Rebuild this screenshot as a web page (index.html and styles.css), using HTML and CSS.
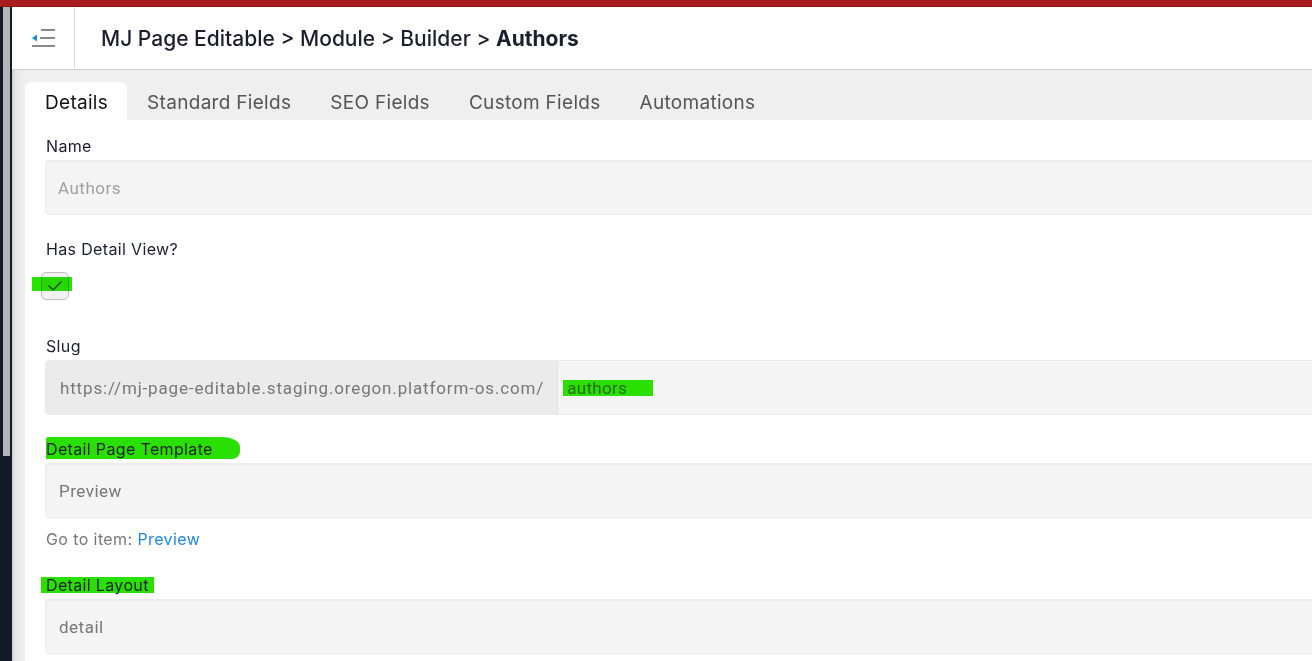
FILE: index.html
```html
<!DOCTYPE html>
<html lang="en">
<head>
<meta charset="utf-8">
<title>Authors</title>
<link rel="stylesheet" href="styles.css">
</head>
<body>
<div class="topbar"></div>
<div class="frame">
  <aside class="rail"><div class="thumb"></div></aside>
  <main class="main">
    <header class="header">
      <div class="menu-cell">
        <svg width="24" height="20" viewBox="0 0 24 20" aria-hidden="true">
          <rect x="9" y="1" width="14" height="2" fill="#8a8a8a"/>
          <rect x="8" y="9" width="15" height="2" fill="#8a8a8a"/>
          <rect x="0" y="17" width="23" height="2" fill="#8a8a8a"/>
          <path d="M0 10 L5 6.5 L5 13.5 Z" fill="#1e88e5"/>
        </svg>
      </div>
      <h1 class="crumbs">MJ Page Editable &gt; Module &gt; Builder &gt; <b>Authors</b></h1>
    </header>
    <nav class="tabs">
      <span class="tab active">Details</span>
      <span class="tab">Standard Fields</span>
      <span class="tab">SEO Fields</span>
      <span class="tab">Custom Fields</span>
      <span class="tab">Automations</span>
    </nav>
    <section class="panel">
      <div class="field">
        <label class="label">Name</label>
        <div class="input muted">Authors</div>
      </div>
      <div class="field">
        <label class="label">Has Detail View?</label>
        <div class="check-wrap">
          <span class="mark mark-check"></span>
          <span class="checkbox">
            <svg width="16" height="12" viewBox="0 0 16 12" aria-hidden="true"><path d="M1.5 5.5 L6 10 L14.5 1.5" fill="none" stroke="#444" stroke-width="1.2"/></svg>
          </span>
        </div>
      </div>
      <div class="field slug-field">
        <label class="label">Slug</label>
        <div class="group">
          <span class="prefix">https://mj-page-editable.staging.oregon.platform-os.com/</span>
          <span class="group-input"><span class="hl">authors</span></span>
        </div>
      </div>
      <div class="field tpl-field">
        <label class="label"><span class="stroke">Detail Page Template</span></label>
        <div class="input">Preview</div>
        <p class="goto">Go to item: <a href="#">Preview</a></p>
      </div>
      <div class="field layout-field">
        <label class="label"><span class="box">Detail Layout</span></label>
        <div class="input">detail</div>
      </div>
    </section>
  </main>
</div>
</body>
</html>
```
FILE: styles.css
```css
* { box-sizing: border-box; }
html, body { margin: 0; height: 100%; overflow: hidden; }
body {
  font-family: Inter, "Noto Sans", sans-serif;
  color: #1a1f2e;
  background: #fff;
}
.topbar {
  height: 7px;
  background: #a81c20;
  border-bottom: 1px solid #8f1518;
}
.frame {
  display: flex;
  height: calc(100% - 7px);
}
.rail {
  width: 12px;
  flex: none;
  background: #111a2b;
  padding: 0 2px 0 3px;
}
.thumb {
  width: 7px;
  height: 449px;
  background: #b4b4b4;
}
.main {
  flex: 1;
  display: flex;
  flex-direction: column;
  min-width: 0;
  background: linear-gradient(to right, #cfd1d4 0, #e6e6e6 4px, #efefef 13px);
}
.header {
  height: 63px;
  flex: none;
  display: flex;
  align-items: center;
  background: #fff;
  border-bottom: 1px solid #cfcfcf;
}
.menu-cell {
  width: 63px;
  height: 100%;
  flex: none;
  display: flex;
  align-items: center;
  justify-content: flex-start;
  border-right: 1px solid #dcdcdc;
  padding-left: 20px;
}
.crumbs {
  margin: 0 0 0 26px;
  font-size: 21px;
  font-weight: 500;
  letter-spacing: 0;
  color: #1a1f2e;
}
.crumbs b { font-weight: 700; }
.tabs {
  flex: none;
  display: flex;
  align-items: flex-end;
  padding: 12px 0 0 13px;
  height: 50px;
}
.tab {
  height: 38px;
  display: flex;
  align-items: center;
  padding: 3px 19px 0 20px;
  font-size: 19px;
  color: #555;
  letter-spacing: 0.3px;
  border-radius: 6px 6px 0 0;
}
.tab.active {
  background: #fff;
  color: #111;
}
.panel {
  flex: 1;
  margin-left: 13px;
  background: #fff;
  padding: 14px 0 0 21px;
}
.field { display: flex; flex-direction: column; }
.label {
  font-size: 16px;
  line-height: 24px;
  margin-bottom: 2px;
  letter-spacing: 0.35px;
  color: #1a1f2e;
}
.input {
  height: 55px;
  margin-left: -1px;
  margin-right: -4px;
  display: flex;
  align-items: center;
  padding: 0 13px;
  background: #f4f4f4;
  border: 1px solid #ebebeb;
  border-radius: 4px;
  box-shadow: inset 0 1px 1px rgba(0,0,0,0.04);
  font-family: Roboto, "Liberation Sans", sans-serif;
  font-size: 17px;
  letter-spacing: 0.5px;
  color: #777;
}
.input.muted { color: #a0a0a0; padding-left: 12px; }
.field + .field { margin-top: 22px; }
.check-wrap {
  position: relative;
  margin-top: 9px;
  height: 28px;
}
.checkbox {
  position: relative;
  width: 28px;
  height: 28px;
  margin-left: -5px;
  display: flex;
  align-items: center;
  justify-content: center;
  border: 1px solid #bdbdbd;
  border-radius: 5px;
  background: #f1f1f1;
}
.mark-check {
  position: absolute;
  left: -14px;
  top: 5px;
  width: 40px;
  height: 14px;
  background: #28e400;
  z-index: 1;
  mix-blend-mode: multiply;
}
.slug-field { margin-top: 34px !important; }
.group {
  display: flex;
  height: 55px;
  margin-left: -1px;
  margin-right: -4px;
  border: 1px solid #ebebeb;
  border-radius: 4px;
  font-family: Roboto, "Liberation Sans", sans-serif;
  font-size: 17px;
  color: #777;
}
.prefix {
  display: flex;
  align-items: center;
  padding: 0 13px 0 14px;
  background: #ebebeb;
  border-right: 1px solid #e0e0e0;
  letter-spacing: 0.85px;
}
.group-input {
  flex: 1;
  display: flex;
  align-items: center;
  padding-left: 5px;
  background: #f4f4f4;
}
.hl {
  background: #2ae000;
  color: #2a6a10;
  padding: 1px 26px 0 4px;
  line-height: 15px;
  letter-spacing: 0.3px;
}
.stroke {
  background: #2ae000;
  padding: 2px 27px 0 0;
  border-radius: 2px 18px 8px 0 / 2px 10px 8px 0;
}
.box {
  background: #2ae000;
  margin-left: -5px;
  padding: 0 5px 0 5px;
  line-height: 16px;
  display: inline-block;
  height: 16px;
}
.goto {
  margin: 11px 0 0;
  font-size: 16px;
  line-height: 20px;
  color: #777;
  letter-spacing: 0.4px;
}
.goto a { color: #1e88e5; text-decoration: none; }
.layout-field { margin-top: 24px !important; }
```
